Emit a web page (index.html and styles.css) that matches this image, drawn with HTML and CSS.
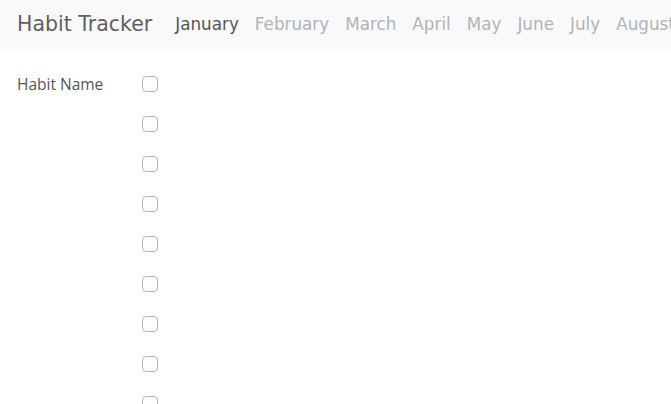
FILE: index.html
```html
<!DOCTYPE html>
<html lang="en">
<head>
  <meta charset="UTF-8">
  <meta name="viewport" content="width=device-width, initial-scale=1.0">
  <title>Habit Tracker</title>
  <link rel="stylesheet" href="styles.css">
</head>
<body>

  <nav class="navbar">
    <span class="brand">Habit Tracker</span>
    <ul class="months">
      <li class="active">January</li>
      <li>February</li>
      <li>March</li>
      <li>April</li>
      <li>May</li>
      <li>June</li>
      <li>July</li>
      <li>August</li>
    </ul>
  </nav>

  <div class="tracker">
    <div class="habit-row">
      <span class="habit-name">Habit Name</span>
      <input type="checkbox" class="day">
    </div>
    <div class="habit-row"><span class="habit-name"></span><input type="checkbox" class="day"></div>
    <div class="habit-row"><span class="habit-name"></span><input type="checkbox" class="day"></div>
    <div class="habit-row"><span class="habit-name"></span><input type="checkbox" class="day"></div>
    <div class="habit-row"><span class="habit-name"></span><input type="checkbox" class="day"></div>
    <div class="habit-row"><span class="habit-name"></span><input type="checkbox" class="day"></div>
    <div class="habit-row"><span class="habit-name"></span><input type="checkbox" class="day"></div>
    <div class="habit-row"><span class="habit-name"></span><input type="checkbox" class="day"></div>
    <div class="habit-row"><span class="habit-name"></span><input type="checkbox" class="day"></div>
  </div>

</body>
</html>
```
FILE: styles.css
```css
body {
  font-family: 'DejaVu Sans', sans-serif;
  background-color: #fff;
  margin: 0;
  overflow: hidden;
  height: 404px;
  color: #555;
}

.navbar {
  display: flex;
  align-items: center;
  height: 47px;
  padding: 0 17px 4px;
  background-color: #f8f9fa;
  white-space: nowrap;
  overflow: hidden;
}

.brand {
  font-size: 20.5px;
  color: #606060;
  margin-right: 23px;
}

.months {
  display: flex;
  list-style: none;
  margin: 0;
  padding: 0;
  gap: 16px;
}

.months li {
  font-size: 16.8px;
  color: #b3b3b3;
}

.months li.active {
  color: #555;
}

.tracker {
  padding: 13px 0 0 17px;
}

.habit-row {
  display: flex;
  align-items: center;
  height: 40px;
}

.habit-name {
  width: 125px;
  font-family: 'Open Sans', sans-serif;
  font-size: 15.5px;
  color: #555;
}

.day {
  appearance: none;
  width: 16px;
  height: 16px;
  margin: 0;
  border: 1px solid #b5b5b5;
  border-radius: 4px;
  background-color: #fff;
}
```
